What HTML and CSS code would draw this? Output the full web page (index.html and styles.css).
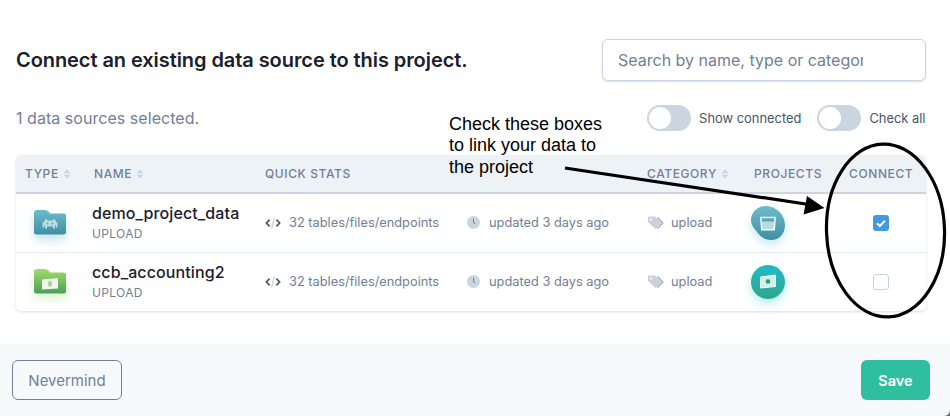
FILE: index.html
```html
<!DOCTYPE html>
<html lang="en">
<head>
<meta charset="utf-8">
<title>Connect data source</title>
<link rel="stylesheet" href="styles.css">
</head>
<body>
<svg class="defs" width="0" height="0" aria-hidden="true">
  <defs>
    <linearGradient id="gBlue" x1="0" y1="0" x2="0" y2="1"><stop offset="0" stop-color="#6fbccb"/><stop offset="1" stop-color="#3f8ea3"/></linearGradient>
    <linearGradient id="gGreen" x1="0" y1="0" x2="0" y2="1"><stop offset="0" stop-color="#a3dc6c"/><stop offset="1" stop-color="#4a9e59"/></linearGradient>
    <linearGradient id="gTeal" x1="0" y1="0" x2="0" y2="1"><stop offset="0" stop-color="#20bcc6"/><stop offset="1" stop-color="#2fa68d"/></linearGradient>
    <symbol id="sort" viewBox="0 0 8 10"><path d="M4 0.5 7.4 4.2H.6ZM4 9.5 .6 5.8H7.4Z" fill="#cbd5e0"/></symbol>
    <symbol id="code" viewBox="0 0 16 12"><path d="M4.6 2.6 1.4 6l3.2 3.4M11.4 2.6 14.6 6l-3.2 3.4" fill="none" stroke="#4a5568" stroke-width="1.7"/><path d="M9.4.6 6.6 11.4" stroke="#cbd5e0" stroke-width="1.5"/></symbol>
    <symbol id="clock" viewBox="0 0 13 13"><circle cx="6.5" cy="6.5" r="6.5" fill="#cbd5e0"/><path d="M6.5 3v3.8l1.6 1" fill="none" stroke="#718096" stroke-width="1"/></symbol>
    <symbol id="tag" viewBox="0 0 17 14"><path d="M10.5 1.5 15.8 7l-5.3 5.5" fill="none" stroke="#a0aec0" stroke-width="1.4"/><path d="M1 1.5Q1 .5 2 .5H8L13.6 6.2Q14.4 7 13.6 7.8L9.4 12.4Q8.6 13.2 7.8 12.4L1 6Z" fill="#cbd0da"/><circle cx="4" cy="3.6" r="1.1" fill="#fff"/></symbol>
  </defs>
</svg>
<main class="page">
  <div class="content">
    <div class="top">
      <h1 class="title">Connect an existing data source to this project.</h1>
      <div class="search"><input class="search-input" type="text" placeholder="Search by name, type or category"></div>
    </div>
    <div class="bar">
      <span class="count">1 data sources selected.</span>
      <div class="toggles">
        <span class="toggle"><span class="switch"><span class="knob"></span></span>Show connected</span>
        <span class="toggle"><span class="switch"><span class="knob"></span></span>Check all</span>
      </div>
    </div>
    <div class="table">
      <div class="row head">
        <span class="th th-type">TYPE<svg class="sort"><use href="#sort"/></svg></span>
        <span class="th th-name">NAME<svg class="sort"><use href="#sort"/></svg></span>
        <span class="th">QUICK STATS</span>
        <span class="th"></span>
        <span class="th">CATEGORY<svg class="sort"><use href="#sort"/></svg></span>
        <span class="th">PROJECTS</span>
        <span class="th">CONNECT</span>
      </div>
      <div class="row item">
        <span class="cell-type">
          <svg class="folder folder-blue" viewBox="0 0 32 25"><path d="M0 3Q0 0 3 0H11Q13 0 14.500 1.500L16 3.500H30Q32 3.500 32 5.500V22Q32 24.500 29.500 24.500H2.500Q0 24.500 0 22Z" fill="url(#gBlue)"/><path d="M11.500 9h1.500v1.500h6V9h1.500v1.500H22v2h1.500v5H22v-2h-1v3h-2v-2h-6v2h-2v-3h-1v2H8.500v-5H10v-2h1.500z" fill="#bcdde4"/><path d="M12.500 12.500h1.800v2h-1.800zM17.700 12.500h1.800v2h-1.800z" fill="#6aaebe"/></svg>
        </span>
        <span class="cell-name"><b class="name">demo_project_data</b><small class="sub">UPLOAD</small></span>
        <span class="stat"><svg class="ico-code"><use href="#code"/></svg>32 tables/files/endpoints</span>
        <span class="stat stat-time"><svg class="ico-clock"><use href="#clock"/></svg>updated 3 days ago</span>
        <span class="stat stat-cat"><svg class="ico-tag"><use href="#tag"/></svg>upload</span>
        <span class="cell-proj">
          <svg class="blob" viewBox="0 0 34 34"><path d="M0 14C0 6 7 0 15 0 25 0 34 9 34 19 34 28 28 34 20 34 13 34 9 30 6 26 3 22 0 19 0 14Z" fill="url(#gBlue)"/><path d="M9.800 11.500H24.200L23.200 23.800H10.800Z" fill="#b4dce3" stroke="#f7fcfd" stroke-width="1.500"/><path d="M10.600 12.200H23.400L23.100 15.500H10.900Z" fill="#5da4b6"/></svg>
        </span>
        <span class="cell-check"><span class="check on"><svg viewBox="0 0 16 16"><path d="M4 8.300 6.800 11 12 5.600" fill="none" stroke="#fff" stroke-width="2"/></svg></span></span>
      </div>
      <div class="row item">
        <span class="cell-type">
          <svg class="folder folder-green" viewBox="0 0 32 25"><path d="M0 3Q0 0 3 0H11Q13 0 14.500 1.500L16 3.500H30Q32 3.500 32 5.500V22Q32 24.500 29.500 24.500H2.500Q0 24.500 0 22Z" fill="url(#gGreen)"/><path d="M8 10.500 24 9V19.500L8 20.500Z" fill="#eef7e9"/><ellipse cx="16" cy="14.800" rx="2" ry="3" fill="#a6d3a2"/></svg>
        </span>
        <span class="cell-name"><b class="name">ccb_accounting2</b><small class="sub">UPLOAD</small></span>
        <span class="stat"><svg class="ico-code"><use href="#code"/></svg>32 tables/files/endpoints</span>
        <span class="stat stat-time"><svg class="ico-clock"><use href="#clock"/></svg>updated 3 days ago</span>
        <span class="stat stat-cat"><svg class="ico-tag"><use href="#tag"/></svg>upload</span>
        <span class="cell-proj">
          <svg class="blob blob-teal" viewBox="0 0 34 34"><circle cx="17" cy="17" r="17" fill="url(#gTeal)"/><path d="M9.500 12 24.500 10V21.500L9.500 23Z" fill="#d4eeea" stroke="#f3fbfa" stroke-width="1"/><circle cx="17" cy="16.500" r="2.300" fill="#1f9e92"/></svg>
        </span>
        <span class="cell-check"><span class="check"></span></span>
      </div>
    </div>
  </div>
  <footer class="footer">
    <button class="btn btn-ghost" type="button">Nevermind</button>
    <button class="btn btn-save" type="button">Save</button>
  </footer>
  <p class="note">Check these boxes<br>to link your data to<br>the project</p>
  <svg class="marks" viewBox="0 0 950 416" aria-hidden="true">
    <ellipse cx="885.500" cy="230.500" rx="59" ry="86.500" fill="none" stroke="#000" stroke-width="3.200" transform="rotate(-2 885.500 230.500)"/>
    <path d="M565 168 809 204.500" stroke="#000" stroke-width="3.200"/>
    <path d="M824.500 208 807 196 803.500 214.500Z" fill="#000"/>
  </svg>
</main>
</body>
</html>
```
FILE: styles.css
```css
* { box-sizing: border-box; }
html, body { margin: 0; padding: 0; background: #fff; }
body { font-family: Inter, "Liberation Sans", sans-serif; color: #1a202c; }
.defs { position: absolute; }
.page { position: relative; width: 950px; height: 416px; overflow: hidden; display: flex; flex-direction: column; background: #6b6b6b; }
.content { flex: 1; background: #fff; padding: 39px 24px 0 16px; }
.top { display: flex; justify-content: space-between; align-items: center; height: 42px; }
.title { margin: 0; font-size: 20px; font-weight: 600; letter-spacing: -.07px; line-height: 42px; color: #1a202c; }
.search { width: 324px; height: 42px; border: 1px solid #cbd5e0; border-radius: 6px; box-shadow: 0 1px 2px rgba(113,128,150,.25); padding: 0 62px 0 15px; display: flex; align-items: center; background: #fff; }
.search-input { width: 100%; border: 0; outline: 0; padding: 0; font: 400 16px Inter, "Liberation Sans", sans-serif; background: transparent; }
.search-input::placeholder { color: #718096; opacity: 1; }
.bar { display: flex; justify-content: space-between; align-items: center; height: 26px; margin-top: 24px; }
.count { font-size: 16px; letter-spacing: .04px; color: #718096; }
.toggles { display: flex; gap: 16px; margin-right: .5px; }
.toggle { display: flex; align-items: center; gap: 8px; font-size: 12.900px; color: #4a5568; }
.switch { width: 44px; height: 26px; border-radius: 13px; background: #cbd5e0; padding: 2px; display: block; }
.knob { display: block; width: 22px; height: 22px; border-radius: 50%; background: #fff; }
.table { margin-top: 24px; border-radius: 6px; box-shadow: 0 1px 3px rgba(113,128,150,.28); background: #fff; }
.row { display: grid; grid-template-columns: 68px 171px 202px 180px 107px 95px 87px; align-items: center; }
.head { height: 39px; background: #edf2f7; border-bottom: 2px solid #cbd5e0; border-radius: 6px 6px 0 0; }
.th { display: flex; align-items: center; gap: 4px; padding-left: 10px; font-size: 12px; font-weight: 500; letter-spacing: .6px; color: #718096; }
.th-type { padding-left: 9px; }
.sort { width: 8px; height: 10px; }
.item { height: 58px; }
.item + .item { height: 59px; border-top: 1px solid #e2e8f0; }
.cell-type { display: flex; padding-left: 18px; margin-top: -2px; }
.folder { width: 32px; height: 25px; overflow: visible; }
.folder-blue { filter: drop-shadow(0 6px 5px rgba(79,170,195,.3)); }
.folder-green { filter: drop-shadow(0 6px 5px rgba(150,225,100,.3)); }
.cell-name { display: flex; flex-direction: column; padding-left: 8px; margin-top: -1px; }
.name { font-size: 16px; font-weight: 500; letter-spacing: .1px; line-height: 22px; color: #1a202c; }
.sub { font-size: 12px; line-height: 20px; letter-spacing: .35px; color: #718096; }
.stat { display: flex; align-items: center; padding-left: 10px; margin-top: -1px; font-size: 12.800px; color: #718096; gap: 8px; }
.stat-time { gap: 9px; }
.stat-cat { gap: 7px; }
.ico-code { width: 16px; height: 12px; }
.ico-clock { width: 13px; height: 13px; }
.ico-tag { width: 17px; height: 14px; }
.cell-proj { display: flex; padding-left: 7px; }
.blob { width: 34px; height: 34px; overflow: visible; filter: drop-shadow(0 5px 5px rgba(79,190,210,.3)); }
.blob-teal { filter: drop-shadow(0 5px 5px rgba(40,215,215,.35)); }
.cell-check { display: flex; padding-left: 34px; }
.check { display: block; width: 16px; height: 16px; border-radius: 3px; border: 1px solid #cbd0d6; background: #fff; }
.check.on { border: 0; background: #4299e1; }
.check svg { display: block; width: 16px; height: 16px; }
.footer { height: 72px; flex: none; background: #f7fafc; border-bottom-right-radius: 6px; display: flex; justify-content: space-between; align-items: center; padding: 0 20px 0 12px; }
.btn { height: 40px; border-radius: 6px; font: 400 15px Inter, "Liberation Sans", sans-serif; }
.btn-ghost { width: 110px; border: 1px solid #718096; background: transparent; color: #718096; }
.btn-save { width: 69px; border: 0; background: #2fbf9e; color: #fff; font-size: 14.500px; font-weight: 600; }
.note { position: absolute; left: 449px; top: 114px; margin: 0; font: 400 18px/21.300px "Liberation Sans", Arial, sans-serif; color: #000; }
.marks { position: absolute; left: 0; top: 0; width: 950px; height: 416px; pointer-events: none; }
```
